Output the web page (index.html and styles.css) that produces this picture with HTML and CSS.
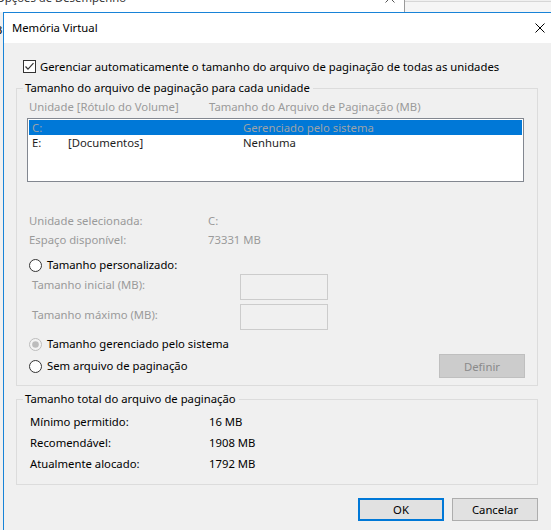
FILE: index.html
```html
<!DOCTYPE html>
<html lang="pt-BR">
<head>
    <meta charset="UTF-8">
    <title>Memória Virtual</title>
    <link rel="stylesheet" href="styles.css">
</head>
<body>
<div class="desktop">

    <!-- window behind the dialog -->
    <div class="back-window">
        <div class="back-title">
            <span>Opções de Desempenho</span>
            <svg class="back-close" width="10" height="10" viewBox="0 0 10 10"><path d="M0.5 0.5 L9.5 9.5 M9.5 0.5 L0.5 9.5" stroke="#555" stroke-width="1" fill="none"/></svg>
        </div>
        <div class="back-body"><span>B</span></div>
    </div>
    <div class="back-right"></div>

    <div class="dialog">
        <div class="titlebar">
            <span class="title">Memória Virtual</span>
            <span class="close">
                <svg width="10" height="10" viewBox="0 0 10 10"><path d="M0.5 0.5 L9.5 9.5 M9.5 0.5 L0.5 9.5" stroke="#000" stroke-width="1" fill="none"/></svg>
            </span>
        </div>

        <div class="content">
            <div class="auto-row">
                <svg class="box" width="13" height="13" viewBox="0 0 13 13"><rect x="0.5" y="0.5" width="12" height="12" fill="#fff" stroke="#333"/><path d="M2.5 6.5 L5 9.2 L10.5 3.2" fill="none" stroke="#333" stroke-width="1.2"/></svg>
                <span>Gerenciar automaticamente o tamanho do arquivo de paginação de todas as unidades</span>
            </div>

            <fieldset class="group group-drives">
                <legend>Tamanho do arquivo de paginação para cada unidade</legend>

                <div class="list-head">
                    <span class="head-drive">Unidade [Rótulo do Volume]</span>
                    <span>Tamanho do Arquivo de Paginação (MB)</span>
                </div>
                <div class="listbox">
                    <div class="list-row selected">
                        <span class="c1">C:</span><span class="c2"></span><span>Gerenciado pelo sistema</span>
                    </div>
                    <div class="list-row">
                        <span class="c1">E:</span><span class="c2">[Documentos]</span><span>Nenhuma</span>
                    </div>
                </div>

                <div class="info-row first">
                    <span class="info-label">Unidade selecionada:</span><span>C:</span>
                </div>
                <div class="info-row">
                    <span class="info-label">Espaço disponível:</span><span>73331 MB</span>
                </div>

                <div class="radio-row custom">
                    <svg class="radio" width="13" height="13" viewBox="0 0 13 13"><circle cx="6.5" cy="6.5" r="6" fill="#fff" stroke="#333"/></svg>
                    <span>Tamanho personalizado:</span>
                </div>
                <div class="size-row first">
                    <span class="size-label">Tamanho inicial (MB):</span>
                    <span class="size-input"></span>
                </div>
                <div class="size-row">
                    <span class="size-label">Tamanho máximo (MB):</span>
                    <span class="size-input"></span>
                </div>

                <div class="radio-row managed">
                    <svg class="radio" width="13" height="13" viewBox="0 0 13 13"><circle cx="6.5" cy="6.5" r="6" fill="#f3f3f3" stroke="#bcbcbc"/><circle cx="6.5" cy="6.5" r="3.3" fill="#bcbcbc"/></svg>
                    <span>Tamanho gerenciado pelo sistema</span>
                </div>
                <div class="radio-row last">
                    <div class="radio-opt">
                        <svg class="radio" width="13" height="13" viewBox="0 0 13 13"><circle cx="6.5" cy="6.5" r="6" fill="#fff" stroke="#333"/></svg>
                        <span>Sem arquivo de paginação</span>
                    </div>
                    <button class="btn btn-disabled">Definir</button>
                </div>
            </fieldset>

            <fieldset class="group group-total">
                <legend>Tamanho total do arquivo de paginação</legend>
                <div class="total-row first"><span class="total-label">Mínimo permitido:</span><span>16 MB</span></div>
                <div class="total-row"><span class="total-label">Recomendável:</span><span>1908 MB</span></div>
                <div class="total-row"><span class="total-label">Atualmente alocado:</span><span>1792 MB</span></div>
            </fieldset>

            <div class="actions">
                <button class="btn btn-default">OK</button>
                <button class="btn">Cancelar</button>
            </div>
        </div>
    </div>
</div>
</body>
</html>
```

FILE: styles.css
```css
body {
    margin: 0;
    font-family: "Noto Sans", sans-serif;
    font-size: 11.3px;
    line-height: 16px;
    color: #000;
}
.desktop {
    position: relative;
    width: 551px;
    height: 530px;
    overflow: hidden;
    background-color: #f0f0f0;
}

/* window behind */
.back-window {
    position: absolute;
    left: -10px;
    top: -16px;
    width: 414px;
    height: 560px;
    background-color: #f0f0f0;
    border-right: 1px solid #9a9a9a;
}
.back-title {
    height: 28px;
    display: flex;
    align-items: center;
    padding-left: 6px;
    background-color: #fff;
    color: #333;
}
.back-close {
    margin-left: auto;
    margin-right: 9px;
}
.back-body {
    padding: 10px 0 0 5px;
}
.back-right {
    position: absolute;
    left: 405px;
    top: 1px;
    width: 146px;
    height: 40px;
    background-color: #f5f5f5;
    border-top: 1px solid #d6d6d6;
}

/* dialog */
.dialog {
    position: absolute;
    left: 3px;
    top: 12px;
    width: 559px;
    height: 530px;
    background-color: #f0f0f0;
    border-left: 1px solid #1883d7;
    border-top: 1px solid #1883d7;
}
.titlebar {
    height: 30px;
    display: flex;
    align-items: center;
    background-color: #fff;
}
.title {
    padding-left: 8px;
}
.close {
    margin-left: auto;
    width: 46px;
    height: 30px;
    display: flex;
    align-items: center;
    justify-content: center;
}
.content {
    padding: 16px 0 0 12px;
}
.auto-row {
    height: 15px;
    display: flex;
    align-items: center;
    gap: 4px;
    margin-left: 7px;
}
.box, .radio {
    flex-shrink: 0;
    display: block;
}

/* group boxes */
.group {
    width: 522px;
    box-sizing: border-box;
    margin: 0;
    padding: 0 11px 7px 10px;
    border: 1px solid #dcdcdc;
}
.group legend {
    margin-left: -4px;
    padding: 0 3px 0 2px;
    line-height: 16px;
}
.group-drives {
    margin-top: 6px;
}
.group-total {
    margin-top: 5px;
    padding-bottom: 12px;
}

.list-head {
    display: flex;
    margin-top: 3px;
    padding-left: 2px;
    color: #9a9a9a;
}
.head-drive {
    width: 180px;
}
.listbox {
    width: 497px;
    height: 64px;
    box-sizing: border-box;
    margin-top: 3px;
    padding: 1px;
    background-color: #fff;
    border: 1px solid #828790;
}
.list-row {
    height: 15px;
    line-height: 15px;
    display: flex;
    color: #1e1e1e;
}
.list-row.selected {
    background-color: #0078d7;
    color: #9ea3a8;
}
.c1 {
    width: 36px;
    padding-left: 3px;
}
.c2 {
    width: 175px;
}

.info-row {
    display: flex;
    margin-top: 3px;
    padding-left: 2px;
    color: #9a9a9a;
}
.info-row.first {
    margin-top: 31px;
}
.info-label {
    width: 179px;
}

.radio-row {
    height: 16px;
    display: flex;
    align-items: center;
    gap: 5px;
    padding-left: 2px;
}
.radio-row.custom {
    margin-top: 9px;
}
.radio-row.managed {
    margin-top: 6px;
}
.radio-row.last {
    height: 24px;
    margin-top: 2px;
    justify-content: space-between;
}
.radio-opt {
    display: flex;
    align-items: center;
    gap: 5px;
}

.size-row {
    height: 26px;
    display: flex;
    margin-top: 4px;
    padding-left: 5px;
    color: #9a9a9a;
}
.size-row.first {
    margin-top: 1px;
}
.size-label {
    width: 208px;
    margin-top: 3px;
}
.size-input {
    width: 88px;
    height: 26px;
    box-sizing: border-box;
    border: 1px solid #cccccc;
    background-color: #f0f0f0;
}

.total-row {
    display: flex;
    margin-top: 5px;
    padding-left: 3px;
}
.total-row.first {
    margin-top: 7px;
}
.total-label {
    width: 179px;
}

/* buttons */
.btn {
    width: 86px;
    height: 23px;
    box-sizing: border-box;
    padding: 0;
    font-family: inherit;
    font-size: inherit;
    color: #000;
    background-color: #e1e1e1;
    border: 1px solid #adadad;
}
.btn-disabled {
    height: 24px;
    margin-right: 1px;
    color: #8a8a8a;
    background-color: #cccccc;
    border-color: #bfbfbf;
}
.btn-default {
    border: 2px solid #0078d7;
}
.actions {
    width: 522px;
    display: flex;
    justify-content: flex-end;
    gap: 8px;
    margin-top: 13px;
}
```
